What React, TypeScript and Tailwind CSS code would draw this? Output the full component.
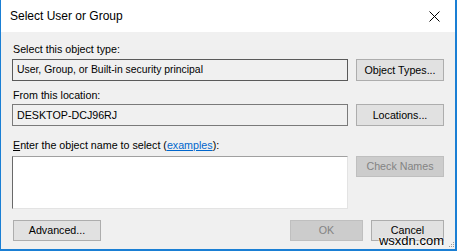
import React from "react";

const Btn = ({ children, disabled, className = "" }: { children: React.ReactNode; disabled?: boolean; className?: string }) => (
  <div
    className={
      "flex items-center justify-center border text-[10.7px] " +
      (disabled
        ? "bg-[#cccccc] border-[#bfbfbf] text-[#838383] "
        : "bg-[#e1e1e1] border-[#adadad] text-black ") +
      className
    }
  >
    {children}
  </div>
);

export default function App() {
  return (
    <div
      className="relative w-[457px] h-[251px] overflow-hidden bg-[#f0f0f0] border-l border-r-2 border-b-2 border-[#1a7fd4] flex flex-col"
      style={{ fontFamily: '"Liberation Sans", Arial, sans-serif' }}
    >
      <div className="h-[32px] bg-white flex items-center justify-between pl-[9px] pr-[10px] shrink-0">
        <span className="text-[12px] text-black">Select User or Group</span>
        <svg width="11" height="11" viewBox="0 0 11 11" className="mr-[5px]">
          <path d="M0.5 0.5 L10.5 10.5 M10.5 0.5 L0.5 10.5" stroke="#000" strokeWidth="1" />
        </svg>
      </div>
      <div className="flex flex-col pl-[11px] pr-[11px] text-[10.7px] text-black">
        <div className="mt-[11px] h-[12px] leading-[12px] pl-[1px]">Select this object type:</div>
        <div className="mt-[4px] flex gap-[8px] h-[22px]">
          <div className="w-[336px] border border-[#5a5a5a] flex items-center pl-[4px] text-[10.4px]">
            User, Group, or Built-in security principal
          </div>
          <Btn className="w-[88px]">Object Types...</Btn>
        </div>
        <div className="mt-[8px] h-[12px] leading-[12px] pl-[1px]">From this location:</div>
        <div className="mt-[3px] flex gap-[8px] h-[22px]">
          <div className="w-[336px] border border-[#7a7a7a] flex items-center pl-[4px]">DESKTOP-DCJ96RJ</div>
          <Btn className="w-[88px]">Locations...</Btn>
        </div>
        <div className="mt-[13px] h-[12px] leading-[12px] pl-[1px]">
          <span className="underline">E</span>nter the object name to select (
          <span className="text-[#0066cc] underline">examples</span>):
        </div>
        <div className="mt-[5px] flex gap-[8px] items-start">
          <div className="w-[336px] h-[53px] bg-white border border-t-[#a0a0a0] border-l-[#696969] border-r-[#e3e3e3] border-b-[#e3e3e3]" />
          <Btn disabled className="w-[88px] h-[21px]">Check Names</Btn>
        </div>
        <div className="mt-[11px] flex h-[21px]">
          <Btn className="w-[88px] ml-[1px]">Advanced...</Btn>
          <div className="flex-1" />
          <Btn disabled className="w-[73px]">OK</Btn>
          <Btn className="w-[73px] ml-[8px] items-start pt-[1px]">Cancel</Btn>
        </div>
      </div>
      <div className="absolute right-[1px] bottom-[2px] grid grid-cols-3 gap-[1px]">
        <span className="w-[1px] h-[1px]" />
        <span className="w-[1px] h-[1px]" />
        <span className="w-[1px] h-[1px] bg-[#9a9a9a]" />
        <span className="w-[1px] h-[1px]" />
        <span className="w-[1px] h-[1px] bg-[#9a9a9a]" />
        <span className="w-[1px] h-[1px] bg-[#9a9a9a]" />
        <span className="w-[1px] h-[1px] bg-[#9a9a9a]" />
        <span className="w-[1px] h-[1px] bg-[#9a9a9a]" />
        <span className="w-[1px] h-[1px] bg-[#9a9a9a]" />
      </div>
      <div
        className="absolute right-[11px] bottom-[2px] text-[13px] leading-[13px] text-black"
        style={{ textShadow: "0 0 2px #fff, 0 0 2px #fff" }}
      >
        wsxdn.com
      </div>
    </div>
  );
}
